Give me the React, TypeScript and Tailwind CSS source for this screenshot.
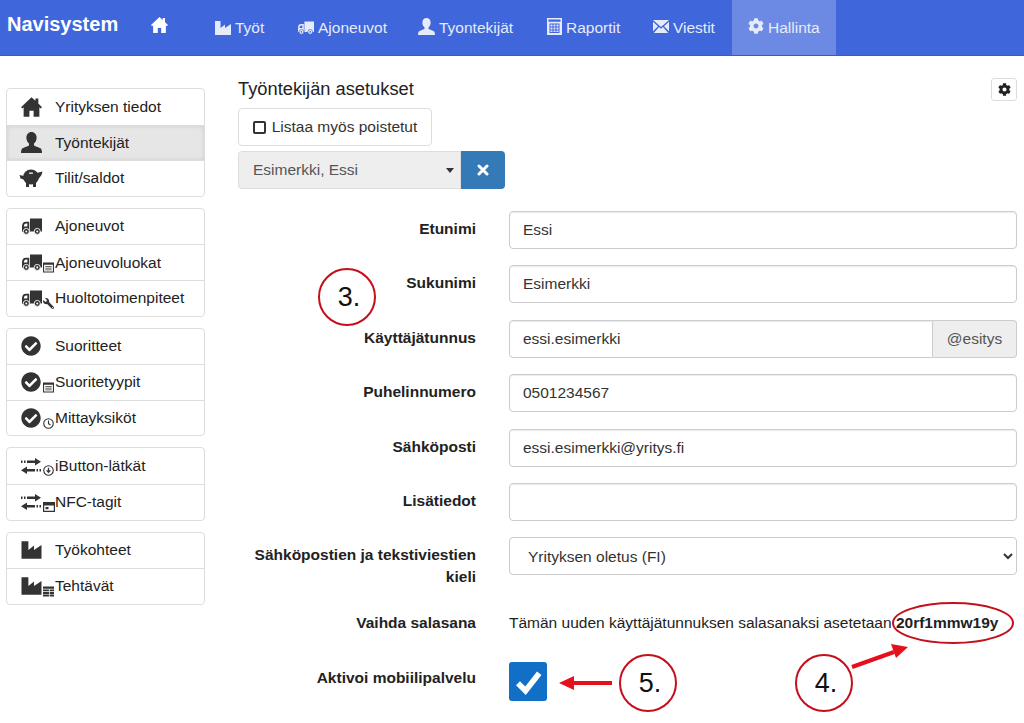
import React from 'react';
import { FaCheckCircle, FaCog, FaWrench } from 'react-icons/fa';

type IconProps = { className?: string };

const HomeIcon = ({ className }: IconProps) => (
  <svg viewBox="0 0 16 15" className={className} fill="currentColor">
    <path d="M8 0 0 7.6 1 8.6 2 7.7V15h4.4v-4.6h3.2V15H14V7.7l1 .9 1-1L13.2 4.9V1h-2.2v1.8z" />
  </svg>
);

const FactoryIcon = ({ className }: IconProps) => (
  <svg viewBox="0 0 16 16" className={className} fill="currentColor">
    <path d="M0 1h5.500v7L10 4.400V8l6-4v11H0z" />
  </svg>
);

const TruckIcon = ({ className, bg = 'white' }: IconProps & { bg?: string }) => (
  <svg viewBox="0 0 16 13" className={className} fill="currentColor">
    <path d="M6.400 0H16v10.500H6.400z" />
    <path d="M5.800 2.600v8H0V6.400C0 4.200 1 2.600 3 2.600z" />
    <path d="M1.500 6.400c0-1.400.6-2.400 2-2.400h.8v2.400z" fill={bg} />
    <circle cx="3.400" cy="10.400" r="2.400" stroke={bg} strokeWidth="0.700" />
    <circle cx="12.200" cy="10.400" r="2.400" stroke={bg} strokeWidth="0.700" />
    <circle cx="3.400" cy="10.400" r="0.800" fill={bg} />
    <circle cx="12.200" cy="10.400" r="0.800" fill={bg} />
  </svg>
);

const UserIcon = ({ className }: IconProps) => (
  <svg viewBox="0 0 16 16" className={className} fill="currentColor">
    <path d="M8 0c2.400 0 3.900 1.900 3.900 4.400 0 1.900-.9 3.500-2 4.400v1.200c0 .7 3.600 1.300 5 2.400.7.6 1.100 1.800 1.100 3.600H0c0-1.800.4-3 1.100-3.600 1.400-1.100 5-1.700 5-2.400V8.800c-1.100-.9-2-2.500-2-4.400C4.100 1.900 5.600 0 8 0z" />
  </svg>
);

const PiggyIcon = ({ className }: IconProps) => (
  <svg viewBox="0 0 24 18" className={className} fill="currentColor">
    <ellipse cx="11.500" cy="8" rx="8" ry="7.500" />
    <path d="M0 6l4.500 1v3.500L1 9.500zM17 4l6-1.500-1 3.500-3 4zM6.500 12h3v6h-3zM13.500 12h3v6h-3z" />
    <rect x="9.500" y="3.600" width="4" height="1.200" rx=".6" fill="white" />
  </svg>
);

const ExchangeIcon = ({ className }: IconProps) => (
  <svg viewBox="0 0 20 16" className={className} fill="currentColor">
    <path d="M0 2.500h1.500V5H0zM3 2.500h1.500V5H3zM6 2.500h8V0l6 3.750-6 3.750V5H6zM20 11h-1.500v2.500H20zM17 11h-1.500v2.500H17zM14 11H6V8.500L0 12.250 6 16v-2.500h8z" />
  </svg>
);

const CalcIcon = ({ className }: IconProps) => (
  <svg viewBox="0 0 15 17" className={className} fill="currentColor">
    <path fillRule="evenodd" d="M0 0h15v17H0zM1.500 1.500v2.200h12V1.500zM2.500 5.500v9.500h10V5.500z" />
    <path d="M3.500 6.500h2v2h-2zM6.500 6.500h2v2h-2zM9.500 6.500h2v2h-2zM3.500 9.500h2v2h-2zM6.500 9.500h2v2h-2zM9.500 9.500h2v2h-2zM3.500 12.500h2V14h-2zM6.500 12.500h2V14h-2zM9.500 12.500h2V14h-2z" />
  </svg>
);

const MailIcon = ({ className }: IconProps) => (
  <svg viewBox="0 0 16 13" className={className} fill="currentColor">
    <path d="M0 0h16L8 7zM0 1.800v9.400l5-5zM16 1.800v9.400l-5-5zM.8 13 6 7l2 1.700L10 7l5.200 6z" />
  </svg>
);

const ListBadge = ({ className }: IconProps) => (
  <svg viewBox="0 0 12 11" className={className} fill="currentColor">
    <path fillRule="evenodd" d="M0 0h12v11H0zM1.200 2.400v7.400h9.600V2.400z" />
    <path d="M2.500 3.800h7v1h-7zM2.500 5.700h7v1h-7zM2.500 7.600h7v1h-7z" />
  </svg>
);

const ClockBadge = ({ className }: IconProps) => (
  <svg viewBox="0 0 12 12" className={className} fill="none" stroke="currentColor" strokeWidth="1.200">
    <circle cx="6" cy="6" r="5.200" />
    <path d="M6 2.800v3.400l2.200 1.400" />
  </svg>
);

const DiscBadge = ({ className }: IconProps) => (
  <svg viewBox="0 0 12 12" className={className} fill="none" stroke="currentColor" strokeWidth="1.200">
    <circle cx="6" cy="6" r="5.200" />
    <path d="M6 3v4M4 5.800l2 2.200 2-2.200" strokeWidth="1.400" />
  </svg>
);

const CardBadge = ({ className }: IconProps) => (
  <svg viewBox="0 0 12 10" className={className} fill="currentColor">
    <path fillRule="evenodd" d="M0 0h12v10H0zM1.200 3.600v5.200h9.600V3.600z" />
    <path d="M2.500 5h3v2.200h-3z" />
  </svg>
);

const TableBadge = ({ className }: IconProps) => (
  <svg viewBox="0 0 12 11" className={className} fill="currentColor">
    <path d="M0 0h12v2.400H0zM0 3.200h6.500v2.100H0zM7.300 3.200H12v2.100H7.300zM0 6h6.500v2.100H0zM7.300 6H12v2.100H7.300zM0 8.900h6.500V11H0zM7.300 8.900H12V11H7.300z" />
  </svg>
);

const navItems = [
  { label: 'Työt', icon: <FactoryIcon className="h-[16px] w-[16px]" />, cls: 'w-[83px]' },
  { label: 'Ajoneuvot', icon: <TruckIcon bg="#3f66db" className="h-[14px] w-[16px]" />, cls: 'w-[120px]' },
  { label: 'Tyontekijät', icon: <UserIcon className="h-[17px] w-[17px] -mt-1" />, cls: 'w-[129px]' },
  { label: 'Raportit', icon: <CalcIcon className="h-[17px] w-[15px] -mt-1" />, cls: 'w-[106px]' },
  { label: 'Viestit', icon: <MailIcon className="h-[13px] w-[16px] -mt-1" />, cls: 'w-[95px]' },
];

const sideGroups = [
  [
    { label: 'Yrityksen tiedot', main: <HomeIcon className="h-[20px] w-[21px]" /> },
    { label: 'Työntekijät', main: <UserIcon className="h-[21px] w-[21px]" />, active: true },
    { label: 'Tilit/saldot', main: <PiggyIcon className="h-[18px] w-[25px] -ml-[2px]" /> },
  ],
  [
    { label: 'Ajoneuvot', main: <TruckIcon className="h-[17px] w-[20px] ml-[1px]" /> },
    { label: 'Ajoneuvoluokat', main: <TruckIcon className="h-[17px] w-[20px] ml-[1px]" />, badge: <ListBadge className="h-[11px] w-[11px]" /> },
    { label: 'Huoltotoimenpiteet', main: <TruckIcon className="h-[17px] w-[20px] ml-[1px]" />, badge: <FaWrench className="h-[11px] w-[11px] -scale-x-100" /> },
  ],
  [
    { label: 'Suoritteet', main: <FaCheckCircle className="h-[20px] w-[20px]" /> },
    { label: 'Suoritetyypit', main: <FaCheckCircle className="h-[20px] w-[20px]" />, badge: <ListBadge className="h-[11px] w-[11px]" /> },
    { label: 'Mittayksiköt', main: <FaCheckCircle className="h-[20px] w-[20px]" />, badge: <ClockBadge className="h-[11px] w-[11px]" /> },
  ],
  [
    { label: 'iButton-lätkät', main: <ExchangeIcon className="h-[16px] w-[20px]" />, badge: <DiscBadge className="h-[11px] w-[11px]" /> },
    { label: 'NFC-tagit', main: <ExchangeIcon className="h-[16px] w-[20px]" />, badge: <CardBadge className="h-[10px] w-[12px]" /> },
  ],
  [
    { label: 'Työkohteet', main: <FactoryIcon className="h-[20px] w-[21px]" /> },
    { label: 'Tehtävät', main: <FactoryIcon className="h-[20px] w-[21px]" />, badge: <TableBadge className="h-[11px] w-[11px]" /> },
  ],
];

const textInput =
  'h-[38px] w-full rounded-[4px] border border-[#ccc] bg-white px-[13px] text-[15.5px] text-[#333] shadow-[inset_0_1px_1px_rgba(0,0,0,0.08)] outline-none';

function Row({ label, children, className }: { label: string; children: React.ReactNode; className: string }) {
  return (
    <div className={`flex ${className}`}>
      <label className="w-[238px] shrink-0 pt-[7px] text-right text-[15.5px] leading-[22px] font-bold text-[#222]">{label}</label>
      <div className="ml-[33px] min-w-0 flex-1">{children}</div>
    </div>
  );
}

function Annotation({ n, className }: { n: string; className: string }) {
  return (
    <div className={`absolute flex h-[58px] w-[58px] items-center justify-center rounded-full border-2 border-[#c4101c] pl-[4px] text-[27px] text-[#111] ${className}`}>
      {n}
    </div>
  );
}

export default function App() {
  return (
    <div className="relative h-[723px] w-[1024px] overflow-hidden bg-white font-['Liberation_Sans',Arial,sans-serif] text-[#222]">
      <header className="flex h-[56px] border-b border-[#3a5cc0] bg-[#3f66db] text-[#e6ebfa]">
        <div className="w-[135px] pt-[11px] pl-[7px] text-[20px] leading-[26px] font-bold text-white">Navisystem</div>
        <div className="flex w-[64px] justify-start pt-[17px] pl-[16px] text-white">
          <HomeIcon className="h-[16px] w-[17px]" />
        </div>
        {navItems.map((item) => (
          <div key={item.label} className={`flex items-center gap-[4px] pt-[1px] pl-[16px] text-[15.5px] ${item.cls}`}>
            {item.icon}
            <span>{item.label}</span>
          </div>
        ))}
        <div className="flex w-[104px] items-center gap-[4px] bg-[#6c89e4] pt-[1px] pl-[16px] text-[15.5px]">
          <FaCog className="h-[16px] w-[16px] -mt-1" />
          <span>Hallinta</span>
        </div>
      </header>

      <div className="flex">
        <aside className="mt-[32px] ml-[6px] flex w-[199px] shrink-0 flex-col gap-[11px]">
          {sideGroups.map((group, i) => (
            <div key={i} className="overflow-hidden rounded-[4px] border border-[#ddd] bg-white">
              {group.map((item, j) => (
                <div
                  key={item.label}
                  className={`flex h-[35.6px] items-center pl-[14px] text-[15.5px] text-[#222] ${j > 0 ? 'border-t border-[#ddd]' : ''} ${item.active ? 'bg-[#e6e6e6] shadow-[inset_0_0_4px_rgba(0,0,0,0.12)]' : ''}`}
                >
                  <span className="relative flex h-full w-[34px] shrink-0 items-center text-[#333]">
                    {item.main}
                    {item.badge && <span className="absolute top-[17px] left-[22px] flex">{item.badge}</span>}
                  </span>
                  <span className="-mt-[1px]">{item.label}</span>
                </div>
              ))}
            </div>
          ))}
        </aside>

        <main className="mt-[22px] ml-[33px] w-[779px]">
          <div className="flex items-start justify-between">
            <h1 className="text-[18.3px] leading-[22px] font-normal text-[#222]">Työntekijän asetukset</h1>
            <button className="flex h-[23px] w-[26px] items-center justify-center rounded-[3px] border border-[#ddd] bg-white text-[#222]">
              <FaCog className="h-[13px] w-[13px]" />
            </button>
          </div>
          <button className="mt-[7px] flex h-[38px] w-[194px] items-center justify-center gap-[6px] rounded-[4px] border border-[#ddd] bg-white text-[15.5px] text-[#333]">
            <span className="h-[13px] w-[13px] rounded-[2px] border-2 border-[#333]" />
            Listaa myös poistetut
          </button>
          <div className="mt-[5px] flex h-[38px] w-[267px]">
            <div className="flex flex-1 items-center justify-between rounded-l-[4px] border border-[#ddd] bg-[#eee] pr-[6px] pl-[14px] text-[15.5px] text-[#555]">
              <span>Esimerkki, Essi</span>
              <span className="h-0 w-0 border-x-[4px] border-t-[5px] border-x-transparent border-t-[#333]" />
            </div>
            <button className="flex w-[44px] items-center justify-center rounded-r-[4px] bg-[#337ab7]">
              <svg viewBox="0 0 12 12" className="h-[12px] w-[12px]" stroke="white" strokeWidth="3" strokeLinecap="round">
                <path d="M2 2l8 8M10 2l-8 8" />
              </svg>
            </button>
          </div>

          <div className="mt-[22px]">
            <Row label="Etunimi" className="mb-[16.4px]">
              <input readOnly value="Essi" className={textInput} />
            </Row>
            <Row label="Sukunimi" className="mb-[16.4px]">
              <input readOnly value="Esimerkki" className={textInput} />
            </Row>
            <Row label="Käyttäjätunnus" className="mb-[16.4px]">
              <div className="flex h-[38px]">
                <input readOnly value="essi.esimerkki" className="h-[38px] min-w-0 flex-1 rounded-l-[4px] border border-[#ccc] bg-white px-[13px] text-[15.5px] text-[#333] shadow-[inset_0_1px_1px_rgba(0,0,0,0.08)] outline-none" />
                <span className="flex w-[84px] items-center justify-center rounded-r-[4px] border border-l-0 border-[#ccc] bg-[#eee] text-[15.5px] text-[#555]">@esitys</span>
              </div>
            </Row>
            <Row label="Puhelinnumero" className="mb-[16.4px]">
              <input readOnly value="0501234567" className={textInput} />
            </Row>
            <Row label="Sähköposti" className="mb-[16.4px]">
              <input readOnly value="essi.esimerkki@yritys.fi" className={textInput} />
            </Row>
            <Row label="Lisätiedot" className="mb-[16.4px]">
              <input readOnly value="" className={textInput} />
            </Row>
            <Row label="Sähköpostien ja tekstiviestien kieli" className="mb-[17px]">
              <select className="h-[38px] w-full rounded-[4px] border border-[#ccc] bg-white pl-[14px] text-[15.5px] text-[#333] outline-none">
                <option>Yrityksen oletus (FI)</option>
              </select>
            </Row>
            <Row label="Vaihda salasana" className="mb-[26px]">
              <p className="pt-[7px] text-[15.5px] leading-[22px] whitespace-nowrap text-[#222]">
                Tämän uuden käyttäjätunnuksen salasanaksi asetetaan <strong>20rf1mmw19y</strong>
              </p>
            </Row>
            <Row label="Aktivoi mobiilipalvelu" className="">
              <span className="mt-[2px] flex h-[39px] w-[38px] items-center justify-center rounded-[3px] bg-[#1170c5]">
                <svg viewBox="0 0 24 24" className="h-[30px] w-[30px]" fill="none" stroke="white" strokeWidth="4.5">
                  <path d="M4 13l6 6L21 5" />
                </svg>
              </span>
            </Row>
          </div>
        </main>
      </div>

      <svg className="pointer-events-none absolute inset-0 h-[723px] w-[1024px]" viewBox="0 0 1024 723">
        <ellipse cx="953" cy="623" rx="60" ry="20" fill="none" stroke="#c4101c" strokeWidth="2" />
        <path d="M612 683H572" stroke="#e6101c" strokeWidth="4" />
        <path d="M559 683l15-7v14z" fill="#e6101c" />
        <path d="M852 667l42-15" stroke="#e6101c" strokeWidth="4" />
        <path d="M908 647l-17-3 5 14z" fill="#e6101c" />
      </svg>
      <Annotation n="3." className="top-[268px] left-[318px]" />
      <Annotation n="5." className="top-[654px] left-[619px]" />
      <Annotation n="4." className="top-[654px] left-[795px]" />
    </div>
  );
}
